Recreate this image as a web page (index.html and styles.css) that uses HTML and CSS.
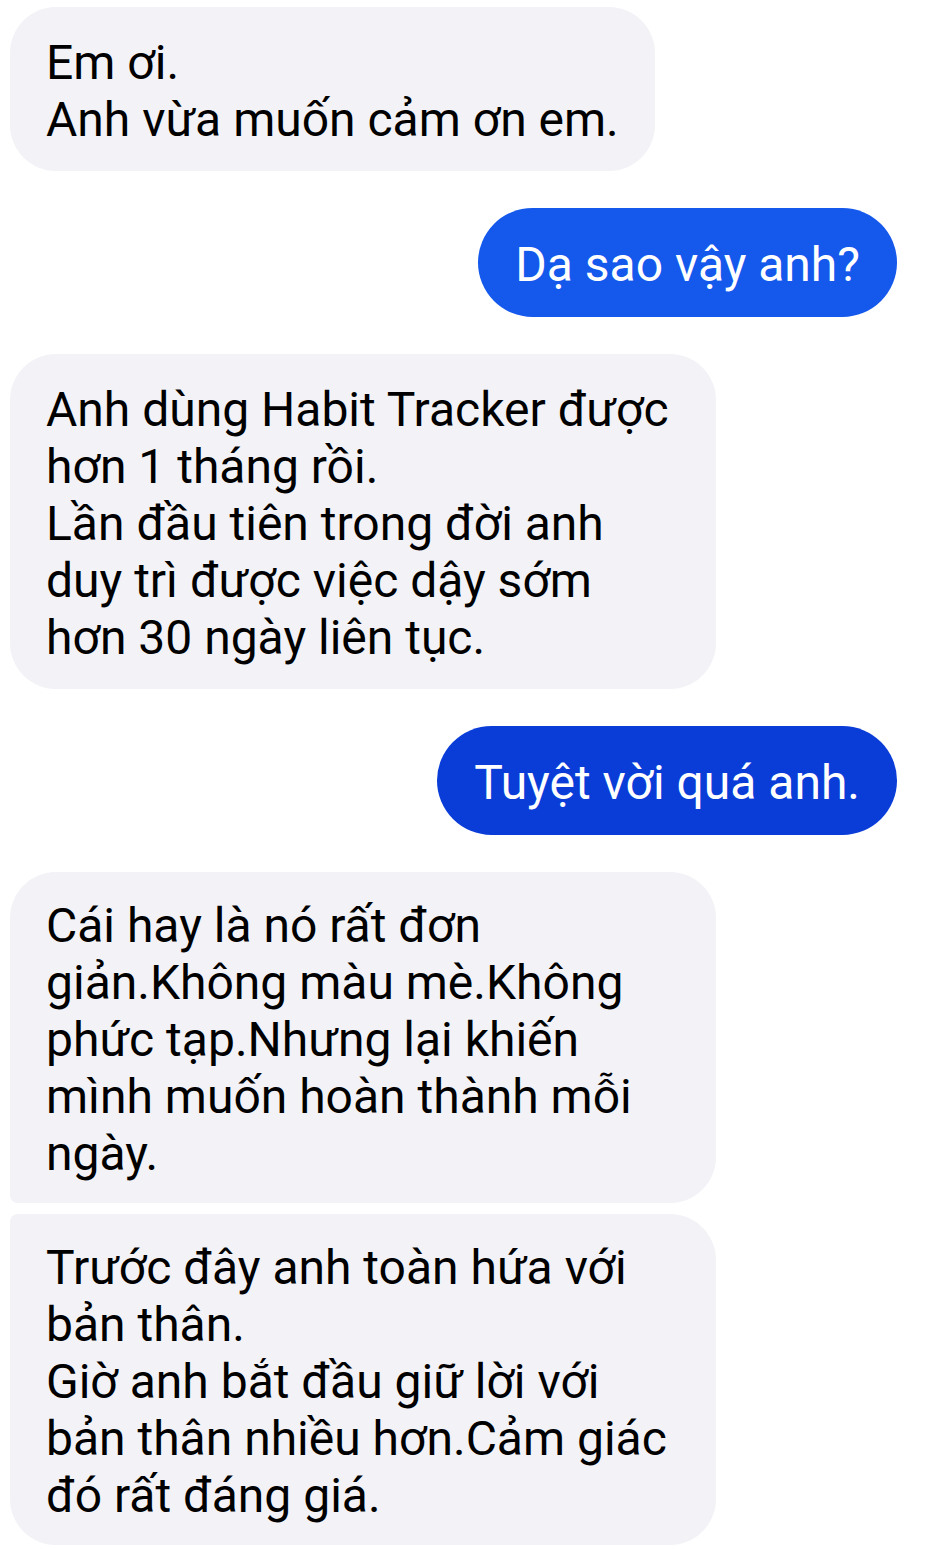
FILE: index.html
```html
<!DOCTYPE html>
<html lang="vi">
<head>
<meta charset="utf-8">
<title>Chat</title>
<link rel="stylesheet" href="styles.css">
</head>
<body>
<div class="chat">
  <div class="row in"><div class="bubble gray">Em ơi.<br>Anh vừa muốn cảm ơn em.</div></div>
  <div class="row out"><div class="bubble blue-a">Dạ sao vậy anh?</div></div>
  <div class="row in"><div class="bubble gray">Anh dùng Habit Tracker được hơn 1 tháng rồi.<br>Lần đầu tiên trong đời anh duy trì được việc dậy sớm hơn 30 ngày liên tục.</div></div>
  <div class="row out"><div class="bubble blue-b">Tuyệt vời quá anh.</div></div>
  <div class="group">
    <div class="row in"><div class="bubble gray first">Cái hay là nó rất đơn giản.Không màu mè.Không phức tạp.Nhưng lại khiến mình muốn hoàn thành mỗi ngày.</div></div>
    <div class="row in"><div class="bubble gray last">Trước đây anh toàn hứa với bản thân.<br>Giờ anh bắt đầu giữ lời với bản thân nhiều hơn.Cảm giác đó rất đáng giá.</div></div>
  </div>
</div>
</body>
</html>
```
FILE: styles.css
```css
html, body {
  margin: 0;
  padding: 0;
  background: #ffffff;
}
body {
  font-family: Roboto, "Noto Sans", sans-serif;
  color: #000000;
}
.chat {
  display: flex;
  flex-direction: column;
  gap: 37px;
  padding: 7px 35px 0 10px;
}
.group {
  display: flex;
  flex-direction: column;
  gap: 11px;
}
.row {
  display: flex;
}
.row.out {
  justify-content: flex-end;
}
.bubble {
  max-width: 634px;
  padding: 27px 36px 23px 36px;
  font-size: 48px;
  line-height: 57px;
  border-radius: 46px;
}
.gray {
  background: #f2f2f7;
}
.blue-a, .blue-b {
  color: #ffffff;
  border-radius: 56px;
  padding: 28px 37px 24px 37px;
}
.blue-a {
  background: #1458ec;
}
.blue-b {
  background: #0a3dd8;
}
.gray.first,
.gray.last {
  padding-top: 25px;
  padding-bottom: 21px;
}
.gray.first {
  border-bottom-left-radius: 8px;
}
.gray.last {
  border-top-left-radius: 8px;
}
```
